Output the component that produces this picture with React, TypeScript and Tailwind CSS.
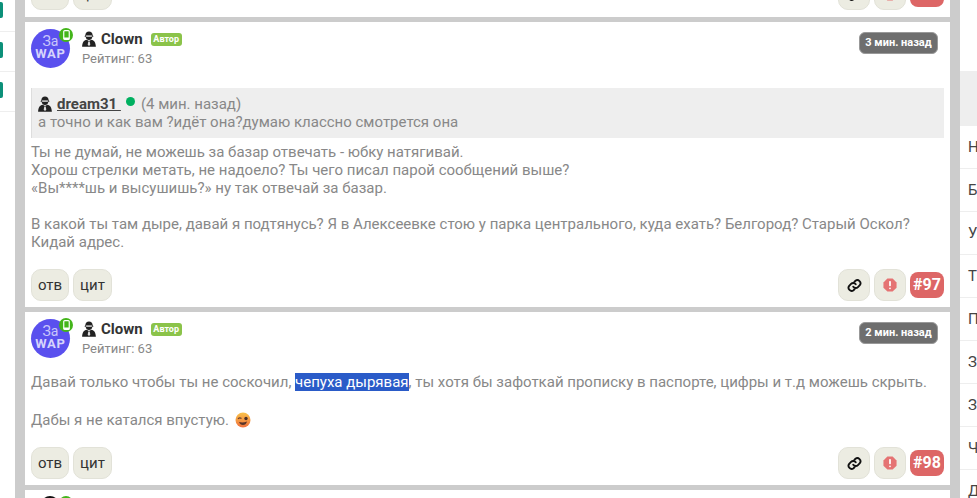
const LinkIcon = () => (
  <svg viewBox="0 0 24 24" className="h-[15px] w-[15px]" fill="none" stroke="#111" strokeWidth="3" strokeLinecap="round">
    <path d="M10 14a5 5 0 0 0 7.5.5l3-3a5 5 0 0 0-7-7l-1.7 1.7" />
    <path d="M14 10a5 5 0 0 0-7.5-.5l-3 3a5 5 0 0 0 7 7l1.7-1.7" />
  </svg>
);

const AlertIcon = () => (
  <svg viewBox="0 0 16 16" className="h-[14px] w-[14px]">
    <path d="M5 0.5h6l4.5 4.5v6L11 15.5H5L0.5 11V5z" fill="#e57373" />
    <rect x="7" y="3.5" width="2" height="6" rx="0.8" fill="#fff" />
    <rect x="7" y="10.8" width="2" height="2" rx="1" fill="#fff" />
  </svg>
);

const SpyIcon = () => (
  <svg viewBox="0.5 0.2 13 14.500" className="h-[16px] w-[14px] shrink-0">
    <path d="M3.600 4.200C3.600 1.800 5 .4 7 .4s3.400 1.400 3.400 3.800l1 .6-1.300.5C9.900 7 9 8.300 7 8.300S4.100 7 3.900 5.300L2.600 4.800z" fill="#222" />
    <rect x="4.300" y="4.100" width="5.400" height="1.300" fill="#ddd" />
    <path d="M4.800 8.100L7 9.300l2.200-1.200c2.600.6 4 2.400 4.200 6.500H.6C.8 10.500 2.200 8.700 4.800 8.100z" fill="#222" />
    <path d="M6.300 9.800h1.400l.5 3-1.200 1.200-1.200-1.200z" fill="#ddd" />
  </svg>
);

const MobileIcon = () => (
  <svg viewBox="0 0 8 12" className="h-[10px] w-[7px]">
    <rect x="0.700" y="0.700" width="6.600" height="10.600" rx="1.200" fill="none" stroke="#fff" strokeWidth="1.400" />
    <rect x="0.700" y="9" width="6.600" height="2.300" fill="#fff" />
  </svg>
);

const Btn = ({ children, className }: { children: React.ReactNode; className: string }) => (
  <button className={`flex h-[32px] items-center justify-center rounded-[10px] border border-[#e2e2d8] bg-[#ecece2] text-[15px] text-[#333] ${className}`}>
    {children}
  </button>
);

const Actions = ({ num }: { num: string }) => (
  <div className="flex items-center justify-between">
    <div className="flex gap-[4px]">
      <Btn className="w-[38px]">отв</Btn>
      <Btn className="w-[39px]">цит</Btn>
    </div>
    <div className="flex items-center gap-[4px]">
      <Btn className="w-[32px]"><LinkIcon /></Btn>
      <Btn className="w-[32px]"><AlertIcon /></Btn>
      <span className="flex h-[26px] w-[34px] items-center justify-center rounded-[8px] bg-[#dd6666] text-[16px] font-bold text-white">{num}</span>
    </div>
  </div>
);

const Avatar = () => (
  <div className="relative h-[40px] w-[40px] shrink-0">
    <div className="flex h-[39px] w-[39px] flex-col items-center justify-center rounded-full bg-[#5a50ee] pb-[3px]">
      <span className="text-[14px] leading-[13px] text-[#c9c6fb]">За</span>
      <span className="text-[13px] font-bold leading-[12px] tracking-[0.8px] text-[#d6d4fc]">WAP</span>
    </div>
    <span className="absolute left-[28px] top-[-1px] flex h-[14px] w-[14px] items-center justify-center rounded-full bg-[#43b51a]">
      <MobileIcon />
    </span>
  </div>
);

const Header = ({ time }: { time: string }) => (
  <div className="flex items-start justify-between">
    <div className="flex gap-[11px]">
      <Avatar />
      <div>
        <div className="flex h-[20px] items-center">
          <SpyIcon />
          <span className="ml-[5px] text-[15px] font-bold text-[#333]">Clown</span>
          <span className="ml-[8px] flex h-[13px] w-[31px] items-center justify-center rounded-[3px] bg-[#8bc34a] text-[9px] font-bold text-white">Автор</span>
        </div>
        <div className="mt-[1px] text-[13px] leading-[18px] text-[#888]">Рейтинг: 63</div>
      </div>
    </div>
    <span className="mr-[6px] mt-[3px] flex h-[22px] w-[79px] items-center justify-center rounded-[6px] border border-[#999] bg-[#6e6e6e] text-[11px] font-bold text-white">{time}</span>
  </div>
);

const Emoji = () => (
  <svg viewBox="0 0 16 16" className="ml-[2px] inline-block h-[16px] w-[16px] align-[-3px]">
    <defs>
      <linearGradient id="f" x1="0" y1="0" x2="0" y2="1">
        <stop offset="0" stopColor="#f9c24a" />
        <stop offset="1" stopColor="#f0703c" />
      </linearGradient>
    </defs>
    <circle cx="8" cy="8" r="7.500" fill="url(#f)" />
    <path d="M3 7 Q4.500 5 6.500 6.500" stroke="#6a4030" strokeWidth="1.200" fill="none" />
    <circle cx="11" cy="6.500" r="1.700" fill="#4a3028" />
    <path d="M4 10 Q8 11 12 9.500 Q11 13 8 13 Q5 13 4 10Z" fill="#5a3428" />
  </svg>
);

const rows = ["Н", "Б", "У", "Т", "П", "З", "З", "Ч", "Д"];

export default function App() {
  return (
    <div className="flex h-[498px] w-[977px] overflow-hidden bg-[#cccccc] font-['Roboto',sans-serif] text-[15px] leading-[18px] text-[#888]">
      <div className="flex h-full w-[15px] shrink-0 flex-col bg-white">
        {[0, 1, 2].map((i) => (
          <div key={i} className={`${i === 0 ? "h-[32px]" : "h-[40px]"} flex items-end border-b border-[#eee] pb-[13px]`}>
            <span className="h-[16px] w-[3px] rounded-r-[2px] bg-[#0b9079]" />
          </div>
        ))}
      </div>

      <main className="ml-[10px] flex w-[925px] shrink-0 flex-col gap-[5px]">
        <section className="flex h-[17px] shrink-0 items-end overflow-hidden bg-white px-[6px] pb-[7px]">
          <div className="w-full"><Actions num="#96" /></div>
        </section>

        <section className="flex h-[285px] shrink-0 flex-col bg-white px-[6px] pt-[7px]">
          <Header time="3 мин. назад" />
          <div className="mt-[19px] h-[50px] border-l border-[#ddd] bg-[#eeeeee] pl-[6px] pt-[6px]">
            <div className="flex h-[19px] items-center text-[15px]">
              <span className="flex items-center font-bold text-[#444] underline">
                <SpyIcon />
                <span className="ml-[5px]">dream31&nbsp;</span>
              </span>
              <span className="ml-[5px] h-[9px] w-[9px] -translate-y-[2px] rounded-full bg-[#00b060]" />
              <span className="ml-[6px] text-[#888]">(4 мин. назад)</span>
            </div>
            <div className="leading-[18px]">а точно и как вам ?идёт она?думаю классно смотрется она</div>
          </div>
          <div className="mt-[5px] h-[126px]">
            Ты не думай, не можешь за базар отвечать - юбку натягивай.<br />
            Хорош стрелки метать, не надоело? Ты чего писал парой сообщений выше?<br />
            «Вы****шь и высушишь?» ну так отвечай за базар.<br />
            <br />
            В какой ты там дыре, давай я подтянусь? Я в Алексеевке стою у парка центрального, куда ехать? Белгород? Старый Оскол?<br />
            Кидай адрес.
          </div>
          <Actions num="#97" />
        </section>

        <section className="flex h-[173px] shrink-0 flex-col bg-white px-[6px] pt-[7px]">
          <Header time="2 мин. назад" />
          <div className="mt-[14px] h-[74px]">
            <p>Давай только чтобы ты не соскочил, <span className="bg-[#2a5bc8] text-white">чепуха дырявая</span>, ты хотя бы зафоткай прописку в паспорте, цифры и т.д можешь скрыть.</p>
            <p className="mt-[20px]">Дабы я не катался впустую. <Emoji /></p>
          </div>
          <Actions num="#98" />
        </section>

        <section className="relative h-[40px] shrink-0 bg-white">
          <div className="absolute left-[16px] top-[6px] h-[20px] w-[18px] rounded-full bg-[#111]" />
          <div className="absolute left-[34px] top-[6px] h-[14px] w-[14px] rounded-full bg-[#43b51a]" />
        </section>
      </main>

      <aside className="ml-[10px] flex w-[17px] shrink-0 flex-col bg-white">
        <div className="h-[71px] shrink-0" />
        <div className="h-[55px] shrink-0 bg-[#eeeeee]" />
        {rows.map((r, i) => (
          <div key={i} className="flex h-[43px] shrink-0 items-center overflow-hidden border-b border-[#eee] pl-[8px] text-[15px] text-[#444]">{r}</div>
        ))}
      </aside>
    </div>
  );
}
